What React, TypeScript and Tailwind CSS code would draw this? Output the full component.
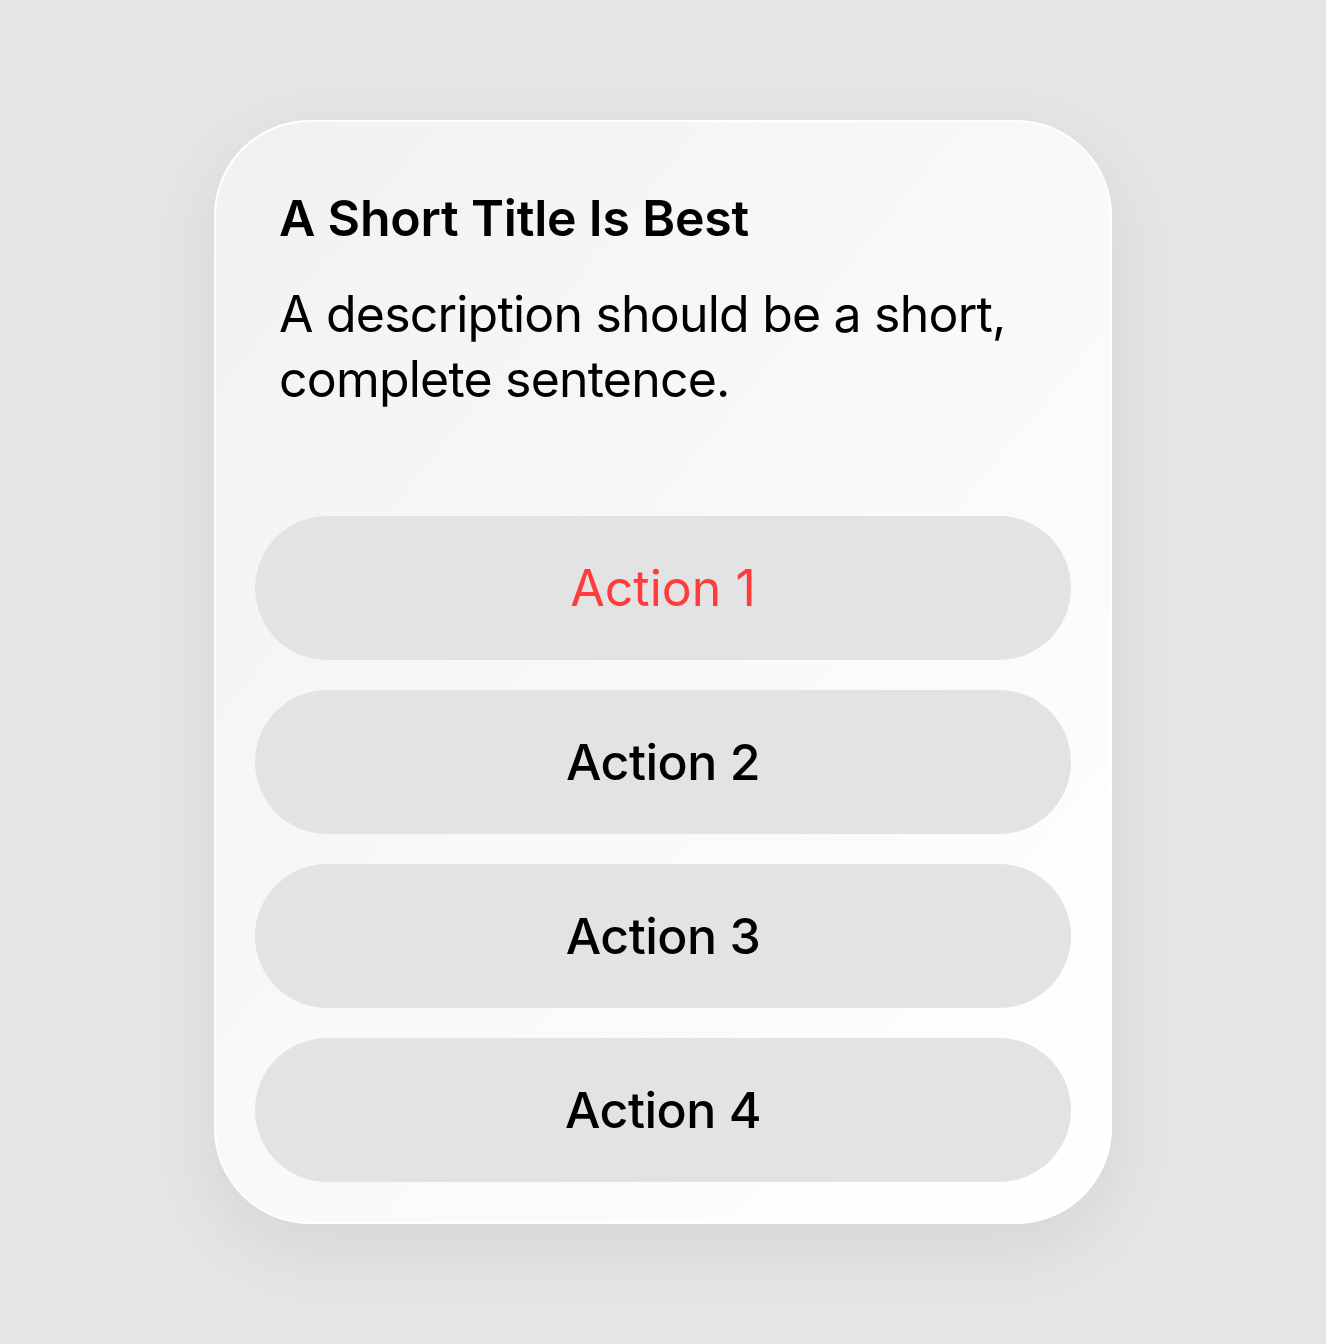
export default function App() {
  const actions = [
    { label: "Action 1", destructive: true },
    { label: "Action 2" },
    { label: "Action 3" },
    { label: "Action 4" },
  ];

  return (
    <div className="min-h-screen w-full bg-[#e5e5e5] flex items-center justify-center font-['Inter',sans-serif]">
      <div className="w-[898px] h-[1104px] rounded-[96px] border-2 border-white bg-gradient-to-br from-[#f1f1f1] via-[#f9f9f9] to-white shadow-[0_24px_70px_rgba(0,0,0,0.07)] px-[39px] pt-[66px] pb-[40px] flex flex-col">
        <div className="px-[24px]">
          <h2 className="text-[50px] leading-[60px] font-semibold text-black tracking-[-0.2px]">A Short Title Is Best</h2>
          <p className="mt-[34px] text-[50px] leading-[65px] text-black tracking-[-0.8px]">
            A description should be a short, complete sentence.
          </p>
        </div>

        <div className="mt-auto flex flex-col gap-[30px]">
          {actions.map((a) => (
            <button
              key={a.label}
              className={`h-[144px] w-full rounded-full bg-[#e3e3e3] text-[50px] ${a.destructive ? "text-[#ff3b3b]" : "text-black font-medium tracking-[-0.5px]"}`}
            >
              {a.label}
            </button>
          ))}
        </div>
      </div>
    </div>
  );
}
